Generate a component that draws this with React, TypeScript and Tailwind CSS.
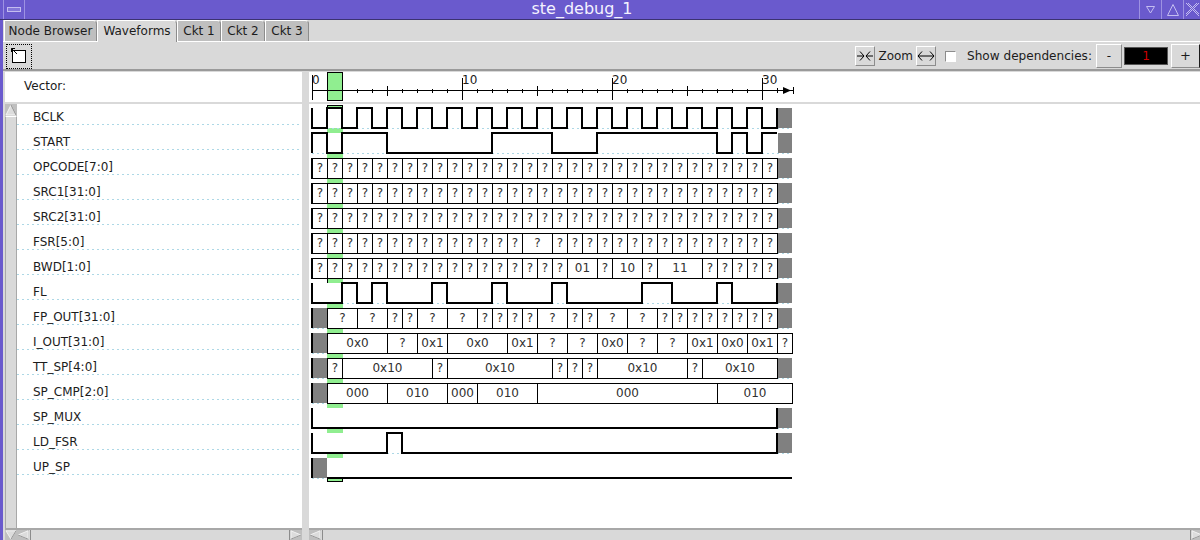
import type { ReactNode } from "react"

const ROW_H = 25
const X0 = 312
const CYCLE = 15
const cx = (k: number) => X0 + k * CYCLE

type Span = [number, string]

const q = (n: number): Span[] => Array.from({ length: n }, () => [1, "?"] as Span)

type Wave = {
  name: string
  kind: "bit" | "vec"
  // bit: k positions where the level flips, starting level in `start`
  flips?: number[]
  start?: 0 | 1
  spans?: Span[]
  leadX?: boolean
  tailX?: boolean
  endK?: number
}

const clock = Array.from({ length: 30 }, (_, i) => i + 1)

const waves: Wave[] = [
  { name: "BCLK", kind: "bit", start: 0, flips: clock, tailX: true },
  { name: "START", kind: "bit", start: 1, flips: [1, 2, 5, 12, 16, 19, 27, 28, 29, 30], tailX: true },
  { name: "OPCODE[7:0]", kind: "vec", spans: q(31), tailX: true },
  { name: "SRC1[31:0]", kind: "vec", spans: q(31), tailX: true },
  { name: "SRC2[31:0]", kind: "vec", spans: q(31), tailX: true },
  { name: "FSR[5:0]", kind: "vec", spans: [...q(14), [2, "?"], ...q(15)], tailX: true },
  { name: "BWD[1:0]", kind: "vec", spans: [...q(17), [2, "01"], [1, "?"], [2, "10"], [1, "?"], [3, "11"], ...q(5)], tailX: true },
  { name: "FL", kind: "bit", start: 0, flips: [2, 3, 4, 5, 8, 9, 12, 13, 16, 17, 22, 24, 27, 28], tailX: true },
  {
    name: "FP_OUT[31:0]",
    kind: "vec",
    leadX: true,
    tailX: true,
    spans: [[2, "?"], [2, "?"], [1, "?"], [1, "?"], [2, "?"], [2, "?"], ...q(4), [2, "?"], ...q(2), [2, "?"], [2, "?"], ...q(8)],
  },
  {
    name: "I_OUT[31:0]",
    kind: "vec",
    leadX: true,
    spans: [[4, "0x0"], [2, "?"], [2, "0x1"], [4, "0x0"], [2, "0x1"], [2, "?"], [2, "?"], [2, "0x0"], [2, "?"], [2, "?"], [2, "0x1"], [2, "0x0"], [2, "0x1"], [1, "?"]],
  },
  {
    name: "TT_SP[4:0]",
    kind: "vec",
    leadX: true,
    tailX: true,
    spans: [[1, "?"], [6, "0x10"], [1, "?"], [7, "0x10"], ...q(3), [6, "0x10"], [1, "?"], [5, "0x10"]],
  },
  {
    name: "SP_CMP[2:0]",
    kind: "vec",
    leadX: true,
    spans: [[4, "000"], [4, "010"], [2, "000"], [4, "010"], [12, "000"], [5, "010"]],
  },
  { name: "SP_MUX", kind: "bit", start: 0, flips: [], tailX: true },
  { name: "LD_FSR", kind: "bit", start: 0, flips: [5, 6], tailX: true },
  { name: "UP_SP", kind: "bit", start: 0, flips: [], leadX: true, endK: 32 },
]

// the wave svg starts at x=309, y=104 in the page
const ox = 309
const oy = 104

function BitRow({ w, top }: { w: Wave; top: number }) {
  const hi = top
  const lo = top + 20
  const level = (l: number) => (l ? hi : lo)
  const startK = w.leadX ? 1 : 0
  const endK = w.endK ?? 31
  let l = w.start ?? 0
  let d = w.leadX ? `M${cx(1)} ${level(l)}` : `M${cx(0)} ${l ? lo : hi} V${level(l)}`
  for (const f of w.flips ?? []) {
    if (f < startK) continue
    l = l ? 0 : 1
    d += ` H${cx(f)} V${level(l)}`
  }
  d += ` H${cx(endK)}`
  if (w.tailX) d += ` V${hi}`
  return (
    <g>
      <rect x={cx(0)} y={top} width={cx(31) - cx(0)} height={20} fill="#ffffff" />
      <path d={d} fill="none" stroke="#000000" strokeWidth={2} shapeRendering="crispEdges" />
    </g>
  )
}

function VecRow({ w, top }: { w: Wave; top: number }) {
  let k = w.leadX ? 1 : 0
  const cells = (w.spans ?? []).map(([n, label]) => {
    const c = { k, n, label }
    k += n
    return c
  })
  return (
    <g>
      {cells.map((c, i) => (
        <g key={i}>
          <rect
            x={cx(c.k) + 0.5}
            y={top + 0.5}
            width={c.n * CYCLE}
            height={20}
            fill="#ffffff"
            stroke="#000000"
            shapeRendering="crispEdges"
          />
          <text
            x={cx(c.k) + (c.n * CYCLE) / 2 + 0.5}
            y={top + 14}
            textAnchor="middle"
            fontSize={12}
            fill="#303030"
            fontFamily="DejaVu Sans, sans-serif"
          >
            {c.label}
          </text>
        </g>
      ))}
      {!w.leadX && <path d={`M${cx(0)} ${top} V${top + 21}`} stroke="#000000" strokeWidth={2} shapeRendering="crispEdges" />}
    </g>
  )
}

function Tab({ label, active, width }: { label: string; active?: boolean; width: string }) {
  return (
    <div
      className={`${width} relative z-10 flex items-center justify-center rounded-tr-[4px] border-t border-t-white border-r border-r-[#8c8c8c] border-l border-l-white text-[12px] text-[#1c1c1c] ${
        active ? "h-[22px] bg-[#d9d9d9] pb-[1px]" : "h-[21px] bg-[#bfbfbf]"
      }`}
    >
      {label}
    </div>
  )
}

function TitleButton({ w, children }: { w: string; children?: ReactNode }) {
  return <div className={`${w} h-[19px] flex items-center justify-center border-l border-[#9d92e2]`}>{children}</div>
}

function ZoomButton({ children }: { children: ReactNode }) {
  return (
    <div className="w-[20px] h-[20px] flex items-center justify-center bg-[#d9d9d9] border border-t-white border-l-white border-r-[#8c8c8c] border-b-[#8c8c8c]">
      <svg width="18" height="12" viewBox="0 0 18 12" fill="none" stroke="#000000" strokeWidth="1">
        {children}
      </svg>
    </div>
  )
}

function Arrow({ dir, w = 12, h = 12 }: { dir: "up" | "down" | "left" | "right"; w?: number; h?: number }) {
  const pts = {
    up: "1,11 6,1 11,11",
    down: "1,1 6,11 11,1",
    left: "11,1 1,6 11,11",
    right: "1,1 11,6 1,11",
  }[dir]
  return (
    <svg width={w} height={h} viewBox="0 0 12 12" preserveAspectRatio="none" className="block shrink-0 bg-[#bfbfbf]">
      <polygon points={pts} fill="#dcdcdc" stroke="#f4f4f4" strokeWidth="1" />
      <polyline points={pts.split(" ").slice(1).join(" ")} fill="none" stroke="#8c8c8c" strokeWidth="1" />
    </svg>
  )
}

function HScroll({ tailClip }: { tailClip?: boolean }) {
  return (
    <div className="h-[12px] shrink-0 flex items-stretch border-t-2 border-[#a8a8a8]">
      <Arrow dir="left" h={10} />
      <div className="flex-1 border-x border-[#8c8c8c] border-t-white bg-[#d9d9d9] ml-[1px]" />
      <div className={tailClip ? "w-[9px] overflow-hidden" : "w-[12px] overflow-hidden"}>
        <Arrow dir="right" h={10} />
      </div>
    </div>
  )
}

function Ruler() {
  const ticks = Array.from({ length: 31 }, (_, k) => k)
  return (
    <svg width={891} height={30} className="block bg-white">
      <rect x={327 - ox + 0.5} y={0.5} width={15} height={28} fill="#90ee90" stroke="#000000" shapeRendering="crispEdges" />
      <path d={`M${312 - ox + 0.5} 3 V28`} stroke="#000" shapeRendering="crispEdges" />
      <path d={`M${312 - ox} 18.5 H${793 - ox}`} stroke="#000" shapeRendering="crispEdges" />
      {ticks.slice(3).map((k) => {
        const major = k % 10 === 0
        const mid = k % 5 === 0
        const h = mid ? 5 : 2
        return (
          <path
            key={k}
            d={major ? `M${cx(k) - ox + 0.5} 6 V28` : `M${cx(k) - ox + 0.5} ${18.5 - h} V${18.5 + h}`}
            stroke="#000"
            shapeRendering="crispEdges"
          />
        )
      })}
      <path d={`M${777 - ox + 0.5} 16 V21`} stroke="#000" shapeRendering="crispEdges" />
      <path d={`M${783 - ox} 15 L${791 - ox} 18.5 L${783 - ox} 22 Z`} fill="#000" />
      <path d={`M${793 - ox + 0.5} 15 V22`} stroke="#000" shapeRendering="crispEdges" />
      {[[0, "0"], [10, "10"], [20, "20"], [30, "30"]].map(([k, t]) => (
        <text
          key={String(t)}
          x={cx(k as number) - ox}
          y={12}
          fontSize={12}
          fill="#1c1c1c"
          fontFamily="DejaVu Sans, sans-serif"
        >
          {t}
        </text>
      ))}
    </svg>
  )
}

export default function App() {
  const height = 424
  return (
    <div className="font-['DejaVu_Sans',sans-serif] w-[1200px] h-[540px] overflow-hidden flex flex-col bg-[#d9d9d9] text-[#1c1c1c]">
      {/* title bar */}
      <div className="h-[20px] shrink-0 flex items-stretch bg-[#6a5acd] border-b border-[#3b3270] pl-[3px] text-white">
        <div className="w-[22px] h-[19px] flex items-center justify-center border-x border-[#9d92e2]">
          <div className="w-[14px] h-[5px] border border-[#c4bdf0] bg-[#8477d8]" />
        </div>
        <div className="flex-1 flex items-center justify-center text-[16px] leading-[17px] pb-[2px] text-[#f4f2ff]">ste_debug_1</div>
        <TitleButton w="w-[22px]">
          <svg width="9" height="8" viewBox="0 0 9 8">
            <polygon points="0.5,0.5 8.5,0.5 4.5,7" fill="none" stroke="#c4bdf0" />
          </svg>
        </TitleButton>
        <TitleButton w="w-[22px]">
          <svg width="12" height="12" viewBox="0 0 12 12">
            <polygon points="0.5,11.5 11.5,11.5 6,0.5" fill="none" stroke="#c4bdf0" />
          </svg>
        </TitleButton>
        <TitleButton w="w-[17px]">
          <svg width="15" height="15" viewBox="0 0 15 15">
            <path d="M1 1 L14 14 M14 1 L1 14 M3 1 L14 12 M12 1 L1 12" fill="none" stroke="#c4bdf0" />
          </svg>
        </TitleButton>
      </div>

      {/* body */}
      <div className="flex-1 min-h-0 flex border-l-[3px] border-[#6a5acd]">
        <div className="flex-1 min-w-0 flex flex-col">
          {/* tabs */}
          <div className="h-[21px] shrink-0 flex items-start pl-[1px]">
            <Tab label="Node Browser" width="w-[93px]" />
            <Tab label="Waveforms" active width="w-[80px]" />
            <Tab label="Ckt 1" width="w-[44px]" />
            <Tab label="Ckt 2" width="w-[44px]" />
            <Tab label="Ckt 3" width="w-[44px]" />
          </div>

          {/* toolbar */}
          <div className="h-[30px] shrink-0 flex items-center border-t border-white border-b-2 border-b-[#9a9a9a] pl-[3px] pt-[1px]">
            <div className="w-[26px] h-[25px] flex items-center justify-center bg-[#d9d9d9] border border-dotted border-black">
              <svg width="16" height="16" viewBox="0 0 16 16">
                <rect x="1.5" y="2.5" width="13" height="12" fill="#ffffff" stroke="#000000" />
                <path d="M0.5 0.5 L6 6 M0.5 0.5 H4 M0.5 0.5 V4" fill="none" stroke="#000000" />
              </svg>
            </div>
            <div className="flex-1" />
            <ZoomButton>
              <path d="M1 6 H8 M4 1.5 L8 6 L4 10.5 M17 6 H10 M14 1.5 L10 6 L14 10.5" />
            </ZoomButton>
            <span className="text-[12px] mx-[3px]">Zoom</span>
            <ZoomButton>
              <path d="M1 6 H17 M5 1.5 L1 6 L5 10.5 M13 1.5 L17 6 L13 10.5" />
            </ZoomButton>
            <div className="w-[11px] h-[11px] bg-white border border-t-[#8c8c8c] border-l-[#8c8c8c] border-r-white border-b-white ml-[9px]" />
            <span className="text-[12.1px] ml-[11px] mr-[4px]">Show dependencies:</span>
            <div className="w-[26px] h-[24px] flex items-center justify-center text-[12px] border border-t-white border-l-white border-r-[#8c8c8c] border-b-[#8c8c8c]">-</div>
            <div className="w-[44px] h-[18px] ml-[2px] mr-[3px] bg-black flex items-center justify-center text-[12px] leading-none text-[#cc0000] border border-[#555555]">1</div>
            <div className="w-[29px] h-[24px] flex items-center justify-center text-[13px] border border-t-white border-l-white border-b-[#8c8c8c]">+</div>
          </div>

          {/* panes */}
          <div className="flex-1 min-h-0 flex pt-[1px]">
            {/* names */}
            <div className="w-[299px] shrink-0 flex flex-col pl-[2px]">
              <div className="h-[30px] shrink-0 bg-white flex items-center pl-[19px] text-[12px] pb-[3px]">Vector:</div>
              <div className="h-[2px] shrink-0" />
              <div className="flex-1 min-h-0 flex">
                <div className="w-[12px] shrink-0 flex flex-col">
                  <Arrow dir="up" />
                  <div className="flex-1 border-x border-[#a8a8a8] border-t border-t-white bg-[#d9d9d9]" />
                  <div className="border-t-2 border-[#a8a8a8]">
                    <Arrow dir="down" h={10} />
                  </div>
                </div>
                <div className="flex-1 min-w-0 flex flex-col">
                  <div className="flex-1 min-h-0 bg-white overflow-hidden">
                    <div className="-mt-[4px]">
                      {waves.map((w) => (
                        <div
                          key={w.name}
                          className="h-[25px] flex items-end pl-[16px] text-[12px] leading-[15px] bg-[repeating-linear-gradient(90deg,#add8e6_0_2px,transparent_2px_5px)] bg-no-repeat bg-bottom bg-[length:100%_1px]"
                        >
                          {w.name}
                        </div>
                      ))}
                    </div>
                  </div>
                  <HScroll />
                </div>
              </div>
            </div>

            {/* splitter */}
            <div className="w-[7px] shrink-0" />

            {/* waveform pane */}
            <div className="flex-1 min-w-0 flex flex-col">
              <Ruler />
              <div className="h-[2px] shrink-0" />
              <div className="flex-1 min-h-0 bg-white">
                <svg width={891} height={height} className="block">
                  <g transform={`translate(${-ox} ${-oy})`}>
                    <rect x={327} y={105} width={16} height={377} fill="#90ee90" />
                    <path
                      d="M327.5 108 V105.5 H342.5 V108 M327.5 478 V481.5 H342.5 V478 M327.5 278 V283"
                      fill="none"
                      stroke="#000000"
                      shapeRendering="crispEdges"
                    />
                    {waves.map((_, i) => (
                      <path
                        key={i}
                        d={`M312 ${128.5 + i * ROW_H} H792`}
                        stroke="#add8e6"
                        strokeDasharray="2 3"
                        shapeRendering="crispEdges"
                      />
                    ))}
                    {waves.map((w, i) => {
                      const top = 108 + i * ROW_H
                      return (
                        <g key={w.name}>
                          {w.kind === "bit" ? <BitRow w={w} top={top} /> : <VecRow w={w} top={top} />}
                          {w.tailX && <rect x={778} y={top} width={14} height={20} fill="#808080" />}
                          {w.leadX && (
                            <g>
                              <rect x={312} y={top} width={15} height={20} fill="#808080" />
                              <path d={`M312 ${top} V${top + 20}`} stroke="#000000" strokeWidth={2} shapeRendering="crispEdges" />
                            </g>
                          )}
                        </g>
                      )
                    })}
                  </g>
                </svg>
              </div>
              <HScroll tailClip />
            </div>
          </div>
        </div>
      </div>
    </div>
  )
}
